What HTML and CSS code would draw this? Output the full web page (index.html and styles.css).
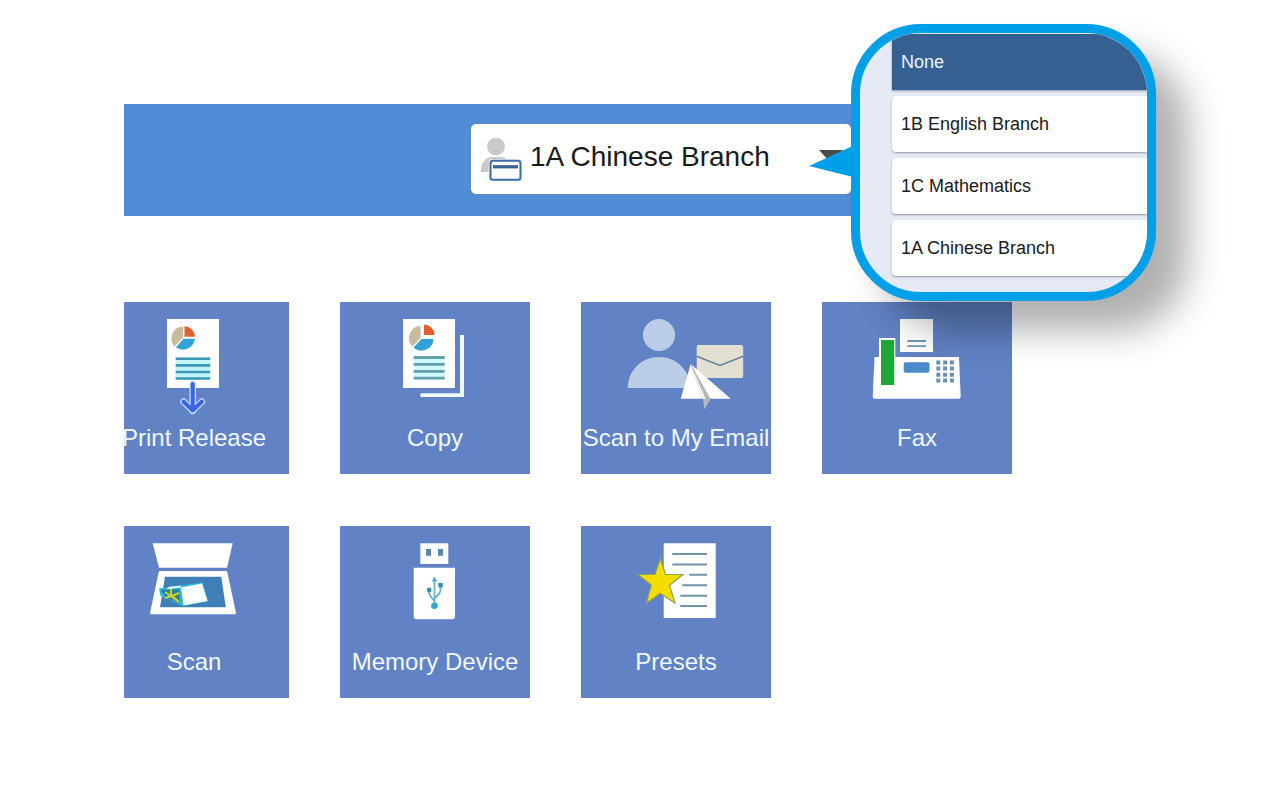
FILE: index.html
```html
<!DOCTYPE html>
<html lang="en">
<head>
<meta charset="utf-8">
<meta name="viewport" content="width=device-width, initial-scale=1">
<title>Home</title>
<link rel="stylesheet" href="styles.css">
</head>
<body>
<main class="home">
  <header class="account-bar">
    <div class="account-picker">
      <svg class="account-icon" viewBox="0 0 44 50" aria-hidden="true">
        <circle cx="18" cy="14.500" r="9" fill="#cac8cc"/>
        <path d="M3 40V36C4 30 8 25.500 14 25H24C28 25.500 31 28 33 32V40Z" fill="#cac8cc"/>
        <rect x="10.500" y="27" width="33.500" height="22.500" rx="3" fill="#e4f3fa"/>
        <rect x="12.500" y="28.800" width="30" height="19" rx="2.500" fill="#fff" stroke="#3d6ca8" stroke-width="2"/>
        <path d="M15 34.800h25" stroke="#376192" stroke-width="3.200"/>
      </svg>
      <select class="account-select" aria-label="Account">
        <option>None</option>
        <option>1B English Branch</option>
        <option>1C Mathematics</option>
        <option selected>1A Chinese Branch</option>
      </select>
      <svg class="account-arrow" viewBox="0 0 24 13" aria-hidden="true"><path d="M0 0h24L12 13Z" fill="#4b4b49"/></svg>
    </div>
    <div class="callout">
      <svg class="callout-tail" viewBox="0 0 48 34" aria-hidden="true"><path d="M0 19L48 -3V31Z" fill="#00a0e9"/></svg>
      <div class="callout-panel">
        <button class="choice choice-current" type="button">None</button>
        <button class="choice" type="button">1B English Branch</button>
        <button class="choice" type="button">1C Mathematics</button>
        <button class="choice" type="button">1A Chinese Branch</button>
      </div>
    </div>
  </header>

  <nav class="functions" aria-label="Functions">
    <div class="tiles">
      <button class="tile" type="button">
        <svg class="tile-icon" viewBox="0 0 190 122" aria-hidden="true">
          <path d="M68 17h52v69H68Z" fill="#fff"/>
          <path d="M84 35.500V24.500A12 12 0 0 0 75.500 44.500Z" fill="#c9b99d"/>
          <path d="M84.500 36.800H96A12 12 0 0 1 77 45.200Z" fill="#30a2d5"/>
          <path d="M85.500 34.800V24.300A10.500 10.500 0 0 1 96 34.800Z" fill="#e2602f"/>
          <path d="M76.700 55.500h34.500v22H76.700Z" fill="#c3f3fb"/>
          <path d="M76.700 56.800h34.500M76.700 63.400h34.500M76.700 70h34.500M76.700 76.500h34.500" stroke="#3c96b4" stroke-width="2.600"/>
          <g fill="none" stroke-linecap="round" stroke-linejoin="round">
            <path d="M93.700 82v27M84.500 99.500l9.200 9.200 9.200-9.200" stroke="#c3dcfb" stroke-width="6.500"/>
            <path d="M93.700 82v26M84.500 99.500l9.200 9 9.200-9" stroke="#3a66e0" stroke-width="4"/>
          </g>
        </svg>
        <span class="tile-label">Print Release</span>
      </button>
      <button class="tile" type="button">
        <svg class="tile-icon" viewBox="0 0 190 122" aria-hidden="true">
          <path d="M120 33h4v62H80.500v-3.700H120Z" fill="#eefaff"/>
          <path d="M63 17h52v69H63Z" fill="#fff"/>
          <path d="M80.500 36V24A12 12 0 0 0 72.500 44.500Z" fill="#c9b99d"/>
          <path d="M81.500 37H93.500A12 12 0 0 1 73.500 45.500Z" fill="#30a2d5"/>
          <path d="M84 33V22.500A10.500 10.500 0 0 1 94.500 33Z" fill="#e2602f"/>
          <path d="M73.700 54h31v23h-31Z" fill="#d2fafc"/>
          <path d="M73.700 55.500h31M73.700 62.400h31M73.700 69.300h31M73.700 76.200h31" stroke="#62a0ae" stroke-width="2.800"/>
        </svg>
        <span class="tile-label">Copy</span>
      </button>
      <button class="tile" type="button">
        <svg class="tile-icon" viewBox="0 0 190 122" aria-hidden="true">
          <circle cx="78" cy="33" r="16" fill="#bccde7"/>
          <path d="M46.700 86C47 68 61 55 78 55S109 68 109.300 86Z" fill="#bccde7"/>
          <rect x="115.700" y="43" width="46.500" height="33" rx="2" fill="#e2e0d0"/>
          <path d="M115.700 54.300L139 63.500 162.200 54.300" fill="none" stroke="#65809b" stroke-width="1.600"/>
          <path d="M109.700 62L99.700 96.700H122Z" fill="#fff"/>
          <path d="M109.700 62L149.700 96.700H129Z" fill="#fff"/>
          <path d="M109.700 62L122 96.700 123.300 107.500 129.500 96.700Z" fill="#b7b7b9"/>
          <path d="M109.700 62L112.500 69 124.500 96.700H122Z" fill="#fff"/>
        </svg>
        <span class="tile-label">Scan to My Email</span>
      </button>
      <button class="tile" type="button">
        <svg class="tile-icon" viewBox="0 0 190 122" aria-hidden="true">
          <path d="M78 17h33v33H78Z" fill="#fff"/>
          <path d="M85.300 39H104M85.300 44.200H104" stroke="#6f98b5" stroke-width="1.800"/>
          <path d="M52.500 55H137L138.700 94.500Q138.700 96.700 136.500 96.700H53Q50.700 96.700 50.700 94.500Z" fill="#fff"/>
          <path d="M57 36h16.300v20H57Z" fill="#fff"/>
          <path d="M59 38h13.200v45H59Z" fill="#20a737"/>
          <rect x="81.700" y="60.300" width="25.800" height="10.500" rx="2" fill="#4b8acb"/>
          <path d="M114.300 60.500h18M114.300 66.500h18M114.300 72.700h18M114.300 78.600h18" stroke="#6a91b8" stroke-width="4" stroke-dasharray="4 2.800"/>
        </svg>
        <span class="tile-label">Fax</span>
      </button>
      <button class="tile" type="button">
        <svg class="tile-icon" viewBox="0 0 190 122" aria-hidden="true">
          <path d="M53.700 17.300h80L128 41.700H60Z" fill="#fff"/>
          <path d="M61 45h66q1 0 1.300 1L137 87q0 1.300-1.300 1.300H52.300Q51 88.300 51 87L59.700 46q.300-1 1.300-1Z" fill="#fff"/>
          <path d="M66 50.700h56.300l4.500 30.600H61Z" fill="#3e7fb8"/>
          <path d="M60 62.500L103.500 56.500 109.500 75.500 84 80 61.500 70Z" fill="#28b9df"/>
          <path d="M82 61.500L103 57.500 108.500 75 84.500 79.500Z" fill="#fff"/>
          <path d="M70 60.800L82 59.500 82 61.500 67 63.500Z" fill="#d9f6ff"/>
          <path d="M62 64L80 63 81 77 67 72Z" fill="#2d7da0"/>
          <path d="M72 63V69L80 76M66 66L80 76M80 67L73 70 66 72" fill="none" stroke="#c8d42e" stroke-width="2"/>
        </svg>
        <span class="tile-label">Scan</span>
      </button>
      <button class="tile" type="button">
        <svg class="tile-icon" viewBox="0 0 190 122" aria-hidden="true">
          <path d="M80.300 17.300h28V38h-28Z" fill="#fff"/>
          <path d="M86 23h5v6.700h-5ZM98 23h5v6.700h-5Z" fill="#5687b2"/>
          <path d="M73.700 41.700H115V90.500Q115 93.300 112 93.300H76.700Q73.700 93.300 73.700 90.500Z" fill="#fff"/>
          <path d="M94.500 54V78M89.200 64V67Q89.200 69 91.500 71.500L94.500 75M100.500 60V64Q100.500 67 97.500 69.500L94.500 72.500" fill="none" stroke="#64b4d0" stroke-width="1.800"/>
          <path d="M94.500 50.500L97.200 55.500H91.800Z" fill="#45a7cc"/>
          <circle cx="94.500" cy="79.700" r="3.300" fill="#36a5cf"/>
          <circle cx="89.200" cy="64" r="2.400" fill="#368dbb"/>
          <path d="M98.300 57h4.400v4.400h-4.400Z" fill="#368dbb"/>
        </svg>
        <span class="tile-label">Memory Device</span>
      </button>
      <button class="tile" type="button">
        <svg class="tile-icon" viewBox="0 0 190 122" aria-hidden="true">
          <path d="M82.700 17.300h52V92h-52Z" fill="#fff"/>
          <path d="M91.300 28H126M91.300 38.500H126M108.300 48.800H126M101.300 59.200H126M99.300 69.700H126M99.300 80H126" stroke="#7394a8" stroke-width="2"/>
          <path d="M79.300 32.500L84.500 48.500H102L88.500 59.300 94 77 79.300 67.500 65.300 77 70.300 59.300 57 48.500H74Z" fill="#f6dd00" stroke="#8ba45a" stroke-width="1.200"/>
        </svg>
        <span class="tile-label">Presets</span>
      </button>
    </div>
  </nav>
</main>
</body>
</html>
```
FILE: styles.css
```css
* {
  box-sizing: border-box;
}

body {
  margin: 0;
  background: #fff;
  font-family: "Liberation Sans", Arial, Helvetica, sans-serif;
}

button,
select {
  margin: 0;
  border: 0;
  font: inherit;
  cursor: pointer;
}

.home {
  padding: 104px 0 100px 124px;
}

.account-bar {
  position: relative;
  display: flex;
  justify-content: flex-end;
  max-width: 732px;
  padding: 20px 5px 22px 0;
  background: #508dd6;
}

.account-picker {
  position: relative;
  width: 380px;
}

.account-icon {
  position: absolute;
  top: 8px;
  left: 7px;
  width: 44px;
  height: 50px;
  pointer-events: none;
}

.account-select {
  display: block;
  width: 100%;
  height: 70px;
  padding: 0 40px 6px 59px;
  border-radius: 5px;
  appearance: none;
  background: #fff;
  color: #1a1a1a;
  font-size: 28px;
  box-shadow: 0 0 1px 1px #6f8a9c55;
}

.account-arrow {
  position: absolute;
  top: 26px;
  right: 8px;
  width: 24px;
  height: 13px;
  pointer-events: none;
}

.callout {
  position: absolute;
  z-index: 1;
  top: -80px;
  left: calc(100% - 5px);
  width: 305px;
}

.callout-tail {
  position: absolute;
  top: 123px;
  left: -42px;
  width: 48px;
  height: 34px;
}

.callout-panel {
  display: flex;
  flex-direction: column;
  gap: 6px;
  padding: 1px 0 16px 32px;
  overflow: hidden;
  border: 9px solid #00a0e9;
  border-radius: 70px;
  background: #e6eaf5;
  box-shadow: 32px 30px 36px rgba(0, 0, 0, 0.31);
}

.choice {
  height: 56px;
  padding: 0 9px;
  border-radius: 4px 0 0 4px;
  background: #fff;
  color: #1a1a1a;
  font-size: 18px;
  text-align: left;
  box-shadow: 0 1px 2px #8f97a5;
}

.choice-current {
  border-radius: 0;
  background: #376092;
  color: #eef6fb;
}

.functions {
  margin-top: 86px;
  overflow: hidden;
}

.tiles {
  display: grid;
  grid-template-columns: repeat(4, 190px);
  gap: 52px 51px;
  margin-left: -25px;
}

.tile {
  display: flex;
  flex-direction: column;
  align-items: center;
  height: 172px;
  padding: 0;
  background: #6182c4;
  color: #eff8fc;
}

.tile-icon {
  display: block;
  flex: none;
  width: 190px;
  height: 122px;
}

.tile-label {
  font-size: 24px;
  line-height: 28px;
  white-space: nowrap;
}
```
